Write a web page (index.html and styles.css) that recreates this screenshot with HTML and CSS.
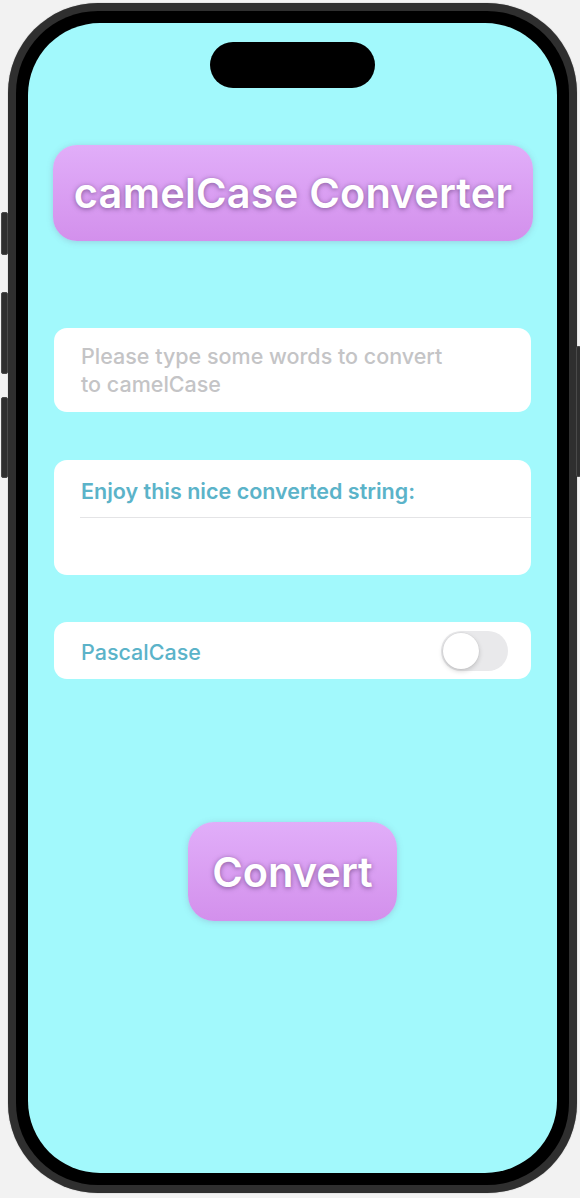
FILE: index.html
```html
<!DOCTYPE html>
<html lang="en">
<head>
<meta charset="utf-8">
<title>camelCase Converter</title>
<link rel="stylesheet" href="styles.css">
</head>
<body>
<div class="phone">
  <span class="side-btn action"></span>
  <span class="side-btn vol-up"></span>
  <span class="side-btn vol-down"></span>
  <span class="side-btn power"></span>
  <div class="bezel">
    <div class="screen">
      <div class="island"></div>
      <div class="title-btn"><span class="title-text">camelCase Converter</span></div>
      <div class="card input-card">
        <div class="placeholder">Please type some words to convert<br>to camelCase</div>
      </div>
      <div class="card output-card">
        <div class="output-header">Enjoy this nice converted string:</div>
        <div class="divider"></div>
        <div class="output-body"></div>
      </div>
      <div class="card toggle-card">
        <span class="toggle-label">PascalCase</span>
        <span class="toggle"><span class="knob"></span></span>
      </div>
      <div class="convert-wrap">
        <div class="convert-btn"><span class="convert-text">Convert</span></div>
      </div>
    </div>
  </div>
</div>
</body>
</html>
```

FILE: styles.css
```css
html, body {
  margin: 0;
  padding: 0;
}
body {
  width: 580px;
  height: 1198px;
  background: #f2f2f2;
  font-family: "Inter", "Noto Sans", "Liberation Sans", sans-serif;
  overflow: hidden;
}
.phone {
  position: relative;
  box-sizing: border-box;
  margin: 3px 0 0 8px;
  width: 569px;
  height: 1190px;
  padding: 8px;
  border-radius: 90px;
  background: #2f2f2f;
  box-shadow: 0 0 1px rgba(0,0,0,0.5);
}
.side-btn {
  position: absolute;
  background: #2f2f2f;
  border: 1px solid #4a4a4a;
  box-sizing: border-box;
  border-radius: 2px;
}
.action { left: -7px; top: 209px; width: 7px; height: 43px; }
.vol-up { left: -7px; top: 289px; width: 7px; height: 82px; }
.vol-down { left: -7px; top: 394px; width: 7px; height: 81px; }
.power { right: -4px; top: 343px; width: 5px; height: 131px; }
.bezel {
  box-sizing: border-box;
  height: 100%;
  padding: 12px;
  border-radius: 82px;
  background: #000;
}
.screen {
  height: 100%;
  border-radius: 72px;
  background: #a2f9fc;
  display: flex;
  flex-direction: column;
  padding: 0 26px 0 26px;
  box-sizing: border-box;
  overflow: hidden;
}
.island {
  align-self: center;
  margin-top: 19px;
  width: 165px;
  height: 46px;
  border-radius: 23px;
  background: #000;
  flex: none;
}
.title-btn {
  margin: 57px -2px 0 -1px;
  height: 96px;
  border-radius: 24px;
  background: linear-gradient(180deg, #e1aef9 0%, #d390ec 100%);
  box-shadow: 0 1px 6px rgba(120, 90, 140, 0.25);
  display: flex;
  align-items: center;
  justify-content: center;
  flex: none;
}
.title-text {
  color: #fff;
  font-size: 41.5px;
  font-weight: 600;
  letter-spacing: 0.2px;
  text-shadow: 0 1px 5px rgba(60, 30, 80, 0.55);
}
.card {
  background: #fff;
  border-radius: 13px;
  flex: none;
}
.input-card {
  margin-top: 87px;
  height: 84px;
  box-sizing: border-box;
  padding: 14px 20px 0 27px;
}
.placeholder {
  color: #c4c4c6;
  font-size: 21.5px;
  font-weight: 500;
  line-height: 28px;
}
.output-card {
  margin-top: 48px;
  height: 115px;
  display: flex;
  flex-direction: column;
}
.output-header {
  padding: 17px 0 0 27px;
  height: 57px;
  color: #5bb3c9;
  font-size: 21.5px;
  font-weight: 600;
  line-height: 28px;
  box-sizing: border-box;
}
.divider {
  margin: 0 0 0 26px;
  height: 1px;
  background: #e4e4e6;
  flex: none;
}
.output-body {
  flex: 1;
}
.toggle-card {
  margin-top: 47px;
  height: 57px;
  display: flex;
  align-items: center;
  justify-content: space-between;
  padding: 0 23px 0 27px;
  box-sizing: border-box;
}
.toggle-label {
  color: #5bb3c9;
  font-size: 21.5px;
  font-weight: 500;
  padding-top: 3px;
}
.toggle {
  position: relative;
  width: 67px;
  height: 40px;
  border-radius: 20px;
  background: #e9e9eb;
  display: flex;
  align-items: center;
  padding: 0 2px;
  box-sizing: border-box;
}
.knob {
  width: 36px;
  height: 36px;
  border-radius: 50%;
  background: #fff;
  box-shadow: 0 2px 5px rgba(0,0,0,0.18), 0 0 0 0.5px rgba(0,0,0,0.06);
}
.convert-wrap {
  margin-top: 143px;
  display: flex;
  justify-content: center;
  flex: none;
}
.convert-btn {
  width: 209px;
  height: 99px;
  border-radius: 26px;
  background: linear-gradient(180deg, #e1aef9 0%, #d390ec 100%);
  box-shadow: 0 1px 6px rgba(120, 90, 140, 0.25);
  display: flex;
  align-items: center;
  justify-content: center;
}
.convert-text {
  color: #fff;
  font-size: 41.5px;
  font-weight: 600;
  text-shadow: 0 1px 5px rgba(60, 30, 80, 0.55);
}
```
